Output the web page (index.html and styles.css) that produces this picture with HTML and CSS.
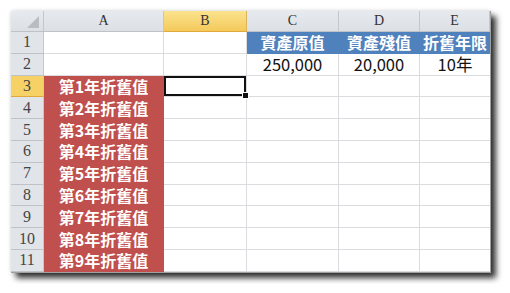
FILE: index.html
```html
<!DOCTYPE html>
<html lang="zh-Hant">
<head>
    <meta charset="UTF-8">
    <title>折舊試算</title>
    <link rel="stylesheet" href="styles.css">
</head>
<body>
    <div class="sheet">
        <div class="hd corner"><span class="tri"></span></div>
        <div class="hd">A</div>
        <div class="hd active">B</div>
        <div class="hd">C</div>
        <div class="hd">D</div>
        <div class="hd last">E</div>

        <div class="rh">1</div>
        <div class="c"></div>
        <div class="c"></div>
        <div class="c blue">資產原值</div>
        <div class="c blue">資產殘值</div>
        <div class="c blue last">折舊年限</div>

        <div class="rh">2</div>
        <div class="c"></div>
        <div class="c"></div>
        <div class="c num">250,000</div>
        <div class="c num">20,000</div>
        <div class="c num last">10年</div>

        <div class="rh active">3</div>
        <div class="c red">第1年折舊值</div>
        <div class="c sel"></div>
        <div class="c"></div>
        <div class="c"></div>
        <div class="c last"></div>

        <div class="rh">4</div>
        <div class="c red">第2年折舊值</div>
        <div class="c"></div><div class="c"></div><div class="c"></div><div class="c last"></div>

        <div class="rh">5</div>
        <div class="c red">第3年折舊值</div>
        <div class="c"></div><div class="c"></div><div class="c"></div><div class="c last"></div>

        <div class="rh">6</div>
        <div class="c red">第4年折舊值</div>
        <div class="c"></div><div class="c"></div><div class="c"></div><div class="c last"></div>

        <div class="rh">7</div>
        <div class="c red">第5年折舊值</div>
        <div class="c"></div><div class="c"></div><div class="c"></div><div class="c last"></div>

        <div class="rh">8</div>
        <div class="c red">第6年折舊值</div>
        <div class="c"></div><div class="c"></div><div class="c"></div><div class="c last"></div>

        <div class="rh">9</div>
        <div class="c red">第7年折舊值</div>
        <div class="c"></div><div class="c"></div><div class="c"></div><div class="c last"></div>

        <div class="rh">10</div>
        <div class="c red">第8年折舊值</div>
        <div class="c"></div><div class="c"></div><div class="c"></div><div class="c last"></div>

        <div class="rh">11</div>
        <div class="c red">第9年折舊值</div>
        <div class="c"></div><div class="c"></div><div class="c"></div><div class="c last"></div>
    </div>
</body>
</html>
```

FILE: styles.css
```css
body {
    margin: 0;
    padding: 11px;
    background: #fff;
}
.sheet {
    display: grid;
    grid-template-columns: 33px 120px 83px 92px 81px 70px;
    grid-template-rows: 21px repeat(11, 21.8px);
    width: 479px;
    background: #fff;
    border-right: 1px solid #a0a0a0;
    border-bottom: 1px solid #a0a0a0;
    box-shadow: 5px 5px 6px rgba(0, 0, 0, 0.8), 0 0 4px rgba(0, 0, 0, 0.15);
    font-family: "Noto Sans CJK TC", sans-serif;
}
.hd, .rh {
    display: flex;
    align-items: center;
    justify-content: center;
    box-sizing: border-box;
    background: linear-gradient(#e6e9ee, #dcdfe4);
    border-right: 1px solid #c4c7cc;
    border-bottom: 1px solid #bfc3c8;
    color: #333;
    font-family: "Liberation Serif", serif;
    font-size: 14px;
    line-height: 1;
}
.rh {
    font-size: 16px;
    color: #444;
    background: #e1e4e9;
}
.hd.active {
    background: linear-gradient(#fbe38d, #f4c95b);
    border-bottom-color: #e0a93a;
    border-right-color: #d9b35a;
}
.rh.active {
    background: #f6d166;
    border-bottom-color: #e0a93a;
}
.corner {
    position: relative;
}
.corner .tri {
    position: absolute;
    right: 4px;
    bottom: 3px;
    width: 0;
    height: 0;
    border-left: 12px solid transparent;
    border-bottom: 12px solid #b9bdc3;
}
.c {
    display: flex;
    align-items: center;
    justify-content: center;
    box-sizing: border-box;
    border-right: 1px solid #dadcdf;
    border-bottom: 1px solid #dadcdf;
    font-size: 16px;
    line-height: 1;
    white-space: nowrap;
}
.c.last {
    border-right: none;
}
.blue {
    background: #4f81bd;
    border-color: #4f81bd;
    color: #fff;
    font-weight: bold;
}
.red {
    background: #c0504d;
    border-color: #c0504d;
    color: #fff;
    font-weight: bold;
}
.num {
    color: #111;
    font-size: 16.5px;
}
.sel {
    position: relative;
    box-shadow: inset 0 0 0 2px #111;
}
.sel::after {
    content: "";
    position: absolute;
    right: -3px;
    bottom: -3px;
    width: 5px;
    height: 5px;
    background: #111;
    border: 1px solid #fff;
}
```
